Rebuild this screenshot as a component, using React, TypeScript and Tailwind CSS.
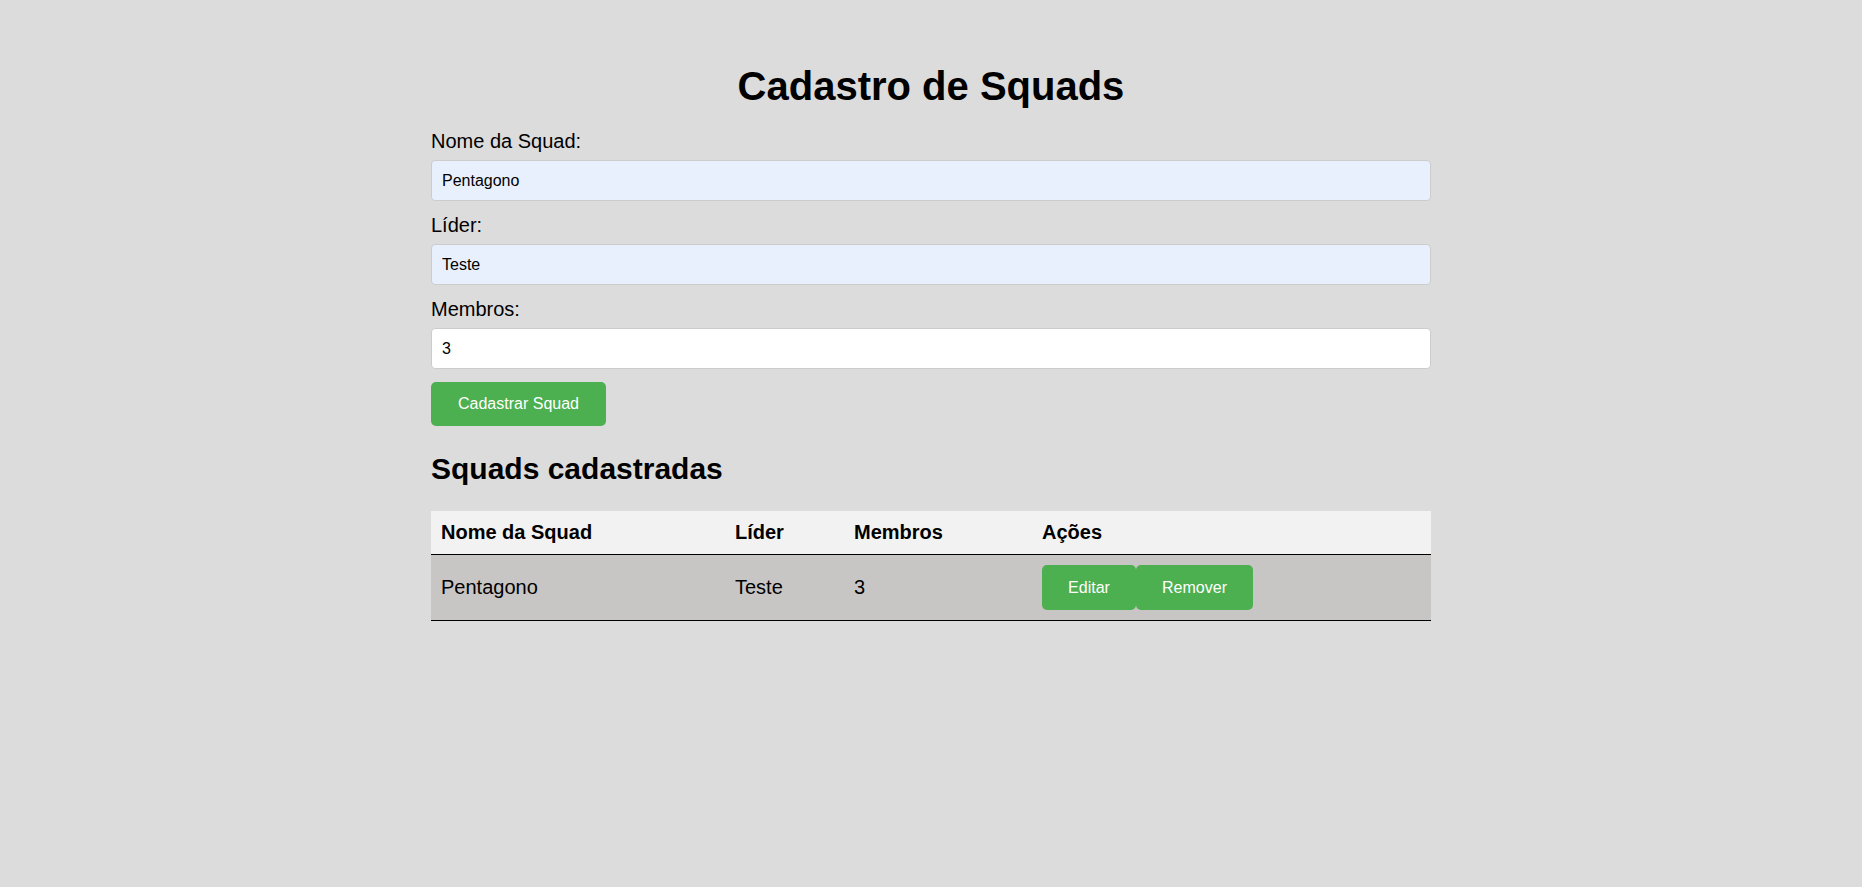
import React from "react";

const fields = [
  { label: "Nome da Squad:", value: "Pentagono", filled: true },
  { label: "Líder:", value: "Teste", filled: true },
  { label: "Membros:", value: "3", filled: false },
];

export default function App() {
  return (
    <div className="min-h-screen bg-[#dcdcdc] text-black font-['Liberation_Sans',Arial,sans-serif]">
      <div className="w-[1000px] mx-auto pt-[63px]">
        <h1 className="text-[40px] leading-[46px] font-bold text-center mb-[21px]">
          Cadastro de Squads
        </h1>
        <form onSubmit={(e) => e.preventDefault()}>
          {fields.map((f) => (
            <div key={f.label}>
              <label className="block text-[20px] leading-[23px] mb-[7px]">{f.label}</label>
              <input
                defaultValue={f.value}
                className={
                  "block w-full h-[41px] pl-[10px] pr-[10px] mb-[13px] border border-[#cccccc] rounded-[4px] text-[16px] leading-[18px] text-black outline-none " +
                  (f.filled ? "bg-[#e8f0fe]" : "bg-white")
                }
              />
            </div>
          ))}
          <button
            type="submit"
            className="block w-[175px] h-[44px] bg-[#4caf50] text-white text-[16px] leading-[18px] rounded-[5px]"
          >
            Cadastrar Squad
          </button>
        </form>
        <h2 className="text-[30px] leading-[35px] font-bold mt-[25px] mb-[25px]">Squads cadastradas</h2>
        <table className="w-full table-fixed border-collapse text-[20px] leading-[23px]">
          <colgroup>
            <col className="w-[294px]" />
            <col className="w-[119px]" />
            <col className="w-[188px]" />
            <col />
          </colgroup>
          <thead>
            <tr className="bg-[#f2f2f2]">
              <th className="p-[10px] text-left font-bold border-b border-black">Nome da Squad</th>
              <th className="p-[10px] text-left font-bold border-b border-black">Líder</th>
              <th className="p-[10px] text-left font-bold border-b border-black">Membros</th>
              <th className="p-[10px] text-left font-bold border-b border-black">Ações</th>
            </tr>
          </thead>
          <tbody>
            <tr className="bg-[#c8c6c4]">
              <td className="p-[10px] align-middle border-b border-black">Pentagono</td>
              <td className="p-[10px] align-middle border-b border-black">Teste</td>
              <td className="p-[10px] align-middle border-b border-black">3</td>
              <td className="p-[10px] align-middle border-b border-black">
                <div className="flex">
                  <button className="w-[94px] h-[45px] bg-[#4caf50] text-white text-[16px] leading-[18px] rounded-[5px]">
                    Editar
                  </button>
                  <button className="w-[117px] h-[45px] bg-[#4caf50] text-white text-[16px] leading-[18px] rounded-[5px]">
                    Remover
                  </button>
                </div>
              </td>
            </tr>
          </tbody>
        </table>
      </div>
    </div>
  );
}
